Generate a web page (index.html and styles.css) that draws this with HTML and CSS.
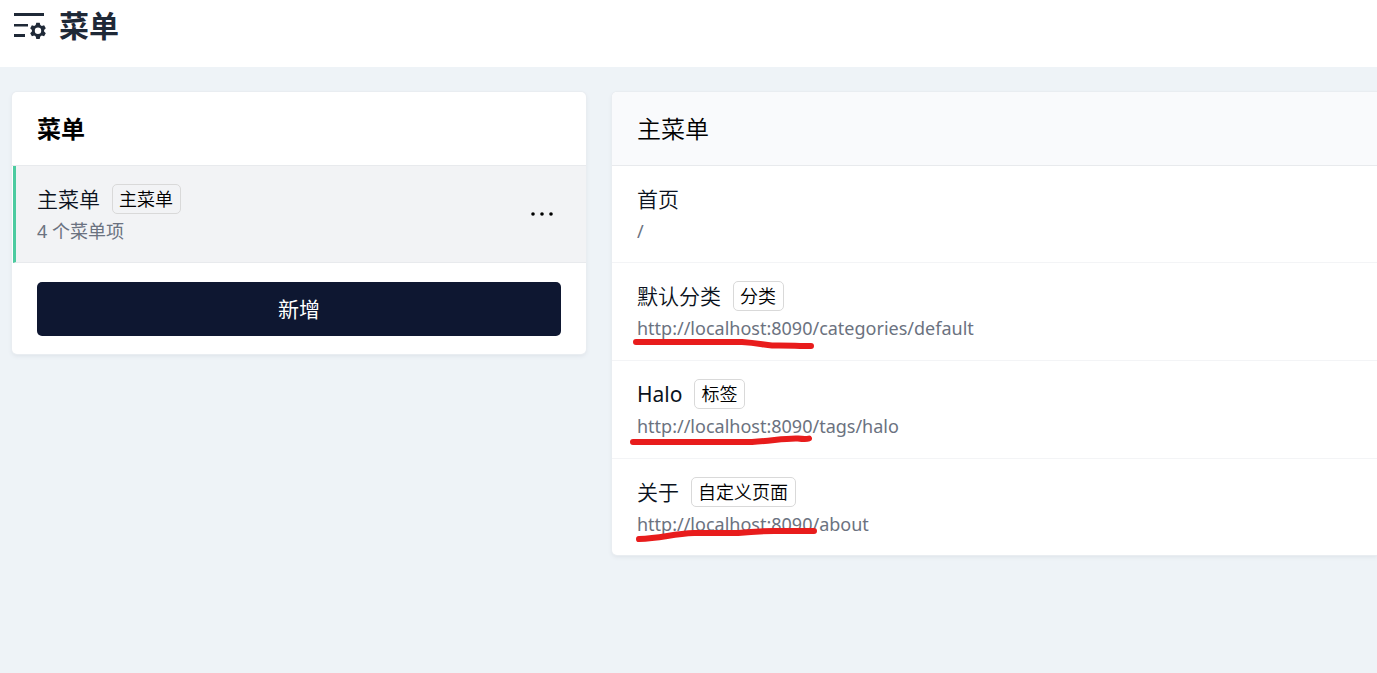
FILE: index.html
```html
<!DOCTYPE html>
<html lang="zh-CN">
<head>
<meta charset="utf-8">
<meta name="viewport" content="width=device-width, initial-scale=1">
<title>菜单</title>
<link rel="stylesheet" href="styles.css">
</head>
<body>
<header class="page-header">
  <svg class="page-icon" viewBox="0 0 32 28" aria-hidden="true">
    <path fill="currentColor" d="M0 0h30v3H0zM0 11h14v2.500H0zM0 21h11v3H0z"/>
    <path fill="currentColor" fill-rule="evenodd" d="M22.300 9.700h3.400l.6 2.400 1.500.9 2.300-.7 1.700 3-1.700 1.600v1.700l1.700 1.700-1.700 3-2.300-.7-1.500.9-.6 2.400h-3.400l-.6-2.400-1.500-.9-2.300.7-1.700-3 1.700-1.700v-1.700l-1.700-1.600 1.700-3 2.300.7 1.500-.9zM24 14.500a3.200 3.200 0 1 0 0 6.400 3.200 3.200 0 0 0 0-6.400z"/>
  </svg>
  <h1 class="page-title">菜单</h1>
</header>
<main class="content">
  <section class="card menus">
    <div class="card-header"><h2 class="card-title strong">菜单</h2></div>
    <div class="menu-row">
      <div class="entry">
        <div class="line"><span class="name">主菜单</span><span class="tag">主菜单</span></div>
        <div class="sub count">4 个菜单项</div>
      </div>
      <button class="more" type="button" aria-label="更多">
        <svg class="dots" viewBox="0 0 24 6" aria-hidden="true"><circle cx="3" cy="2" r="1.800"/><circle cx="12" cy="2" r="1.800"/><circle cx="21" cy="2" r="1.800"/></svg>
      </button>
    </div>
    <div class="card-footer"><button class="add" type="button">新增</button></div>
  </section>
  <section class="card items">
    <div class="card-header tinted"><h2 class="card-title">主菜单</h2></div>
    <ul class="item-list">
      <li class="item">
        <div class="line"><span class="name">首页</span></div>
        <a class="sub" href="#">/</a>
      </li>
      <li class="item">
        <div class="line"><span class="name">默认分类</span><span class="tag">分类</span></div>
        <a class="sub" href="#">http://localhost:8090/categories/default</a>
        <svg class="mark" viewBox="0 0 200 30" aria-hidden="true"><path d="M12 11H118C134 12 140 14 148 14.500C160 14 174 15 187 15"/></svg>
      </li>
      <li class="item">
        <div class="line"><span class="name latin">Halo</span><span class="tag">标签</span></div>
        <a class="sub" href="#">http://localhost:8090/tags/halo</a>
        <svg class="mark" viewBox="0 0 200 30" aria-hidden="true"><path d="M9 13H128C148 12 160 9 174 9.500Q182 10.500 185 9.500"/></svg>
      </li>
      <li class="item">
        <div class="line"><span class="name">关于</span><span class="tag">自定义页面</span></div>
        <a class="sub" href="#">http://localhost:8090/about</a>
        <svg class="mark" viewBox="0 0 200 30" aria-hidden="true"><path d="M15 12C38 11 48 7 70 6H114C132 4 140 4 150 4H190"/></svg>
      </li>
    </ul>
  </section>
</main>
</body>
</html>
```
FILE: styles.css
```css
* { box-sizing: border-box; }
body {
  margin: 0;
  min-height: 100vh;
  background: #eef3f7;
  color: #0b1220;
  font-family: "Noto Sans", "Noto Sans CJK SC", sans-serif;
}
h1, h2, ul { margin: 0; padding: 0; }
.page-header {
  display: flex;
  align-items: flex-start;
  gap: 13px;
  padding: 6px 14px 21px;
  background: #fff;
  color: #1f2937;
}
.page-icon { width: 32px; height: 28px; margin-top: 7px; }
.page-title { font-size: 30px; line-height: 40px; font-weight: 700; }
.content {
  display: flex;
  align-items: flex-start;
  gap: 26px;
  padding: 25px 0 24px 12px;
}
.card {
  background: #fff;
  border-radius: 5px;
  box-shadow: 0 0 0 1px #e9edf1, 0 2px 4px #dce2e8;
  overflow: hidden;
}
.menus { flex: 0 0 42.05%; }
.items { flex: 1; border-radius: 5px 0 0 5px; }
.card-header {
  padding: 19px 25px 18px;
  border-bottom: 1px solid #e8eaed;
  color: #000;
}
.tinted { background: #f9fafc; }
.card-title { font-size: 24px; line-height: 36px; font-weight: 350; }
.strong { font-weight: 700; }
.menu-row {
  display: flex;
  align-items: center;
  justify-content: space-between;
  margin-left: 1px;
  padding: 18px 32px 17px 21px;
  border-left: 3px solid #4ccba0;
  border-bottom: 1px solid #e8eaed;
  background: #f2f3f5;
}
.line { display: flex; align-items: center; gap: 12px; height: 30px; }
.name { font-size: 21px; line-height: 30px; font-weight: 350; }
.latin { font-weight: 400; }
.tag {
  padding: 0 7px 0 6px;
  border: 1px solid #d9d9d9;
  border-radius: 5px;
  background: #fff;
  color: #000;
  font-size: 18px;
  line-height: 28px;
  font-weight: 350;
}
.menu-row .tag { background: transparent; }
.sub {
  display: block;
  width: fit-content;
  margin-top: 3px;
  color: #6b7280;
  font-size: 18px;
  line-height: 28px;
  font-weight: 400;
  text-decoration: none;
}
.more { padding: 0; border: 0; background: none; line-height: 0; }
.dots { width: 24px; height: 6px; fill: #000; }
.card-footer { padding: 19px 25px 18px; }
.add {
  display: block;
  width: 100%;
  height: 54px;
  padding: 0 0 2px;
  border: 0;
  border-radius: 5px;
  background: #0e1731;
  color: #fff;
  font: inherit;
  font-size: 21px;
}
.item-list { list-style: none; }
.item { position: relative; padding: 18px 25px; border-bottom: 1px solid #f3f4f6; }
.item:first-child { padding-bottom: 17px; }
.item:last-child { padding-bottom: 17px; border-bottom: 0; }
.mark {
  position: absolute;
  left: 12px;
  top: 68px;
  width: 200px;
  height: 30px;
  fill: none;
  stroke: #e81c1c;
  stroke-width: 6;
  stroke-linecap: round;
  pointer-events: none;
}
```
